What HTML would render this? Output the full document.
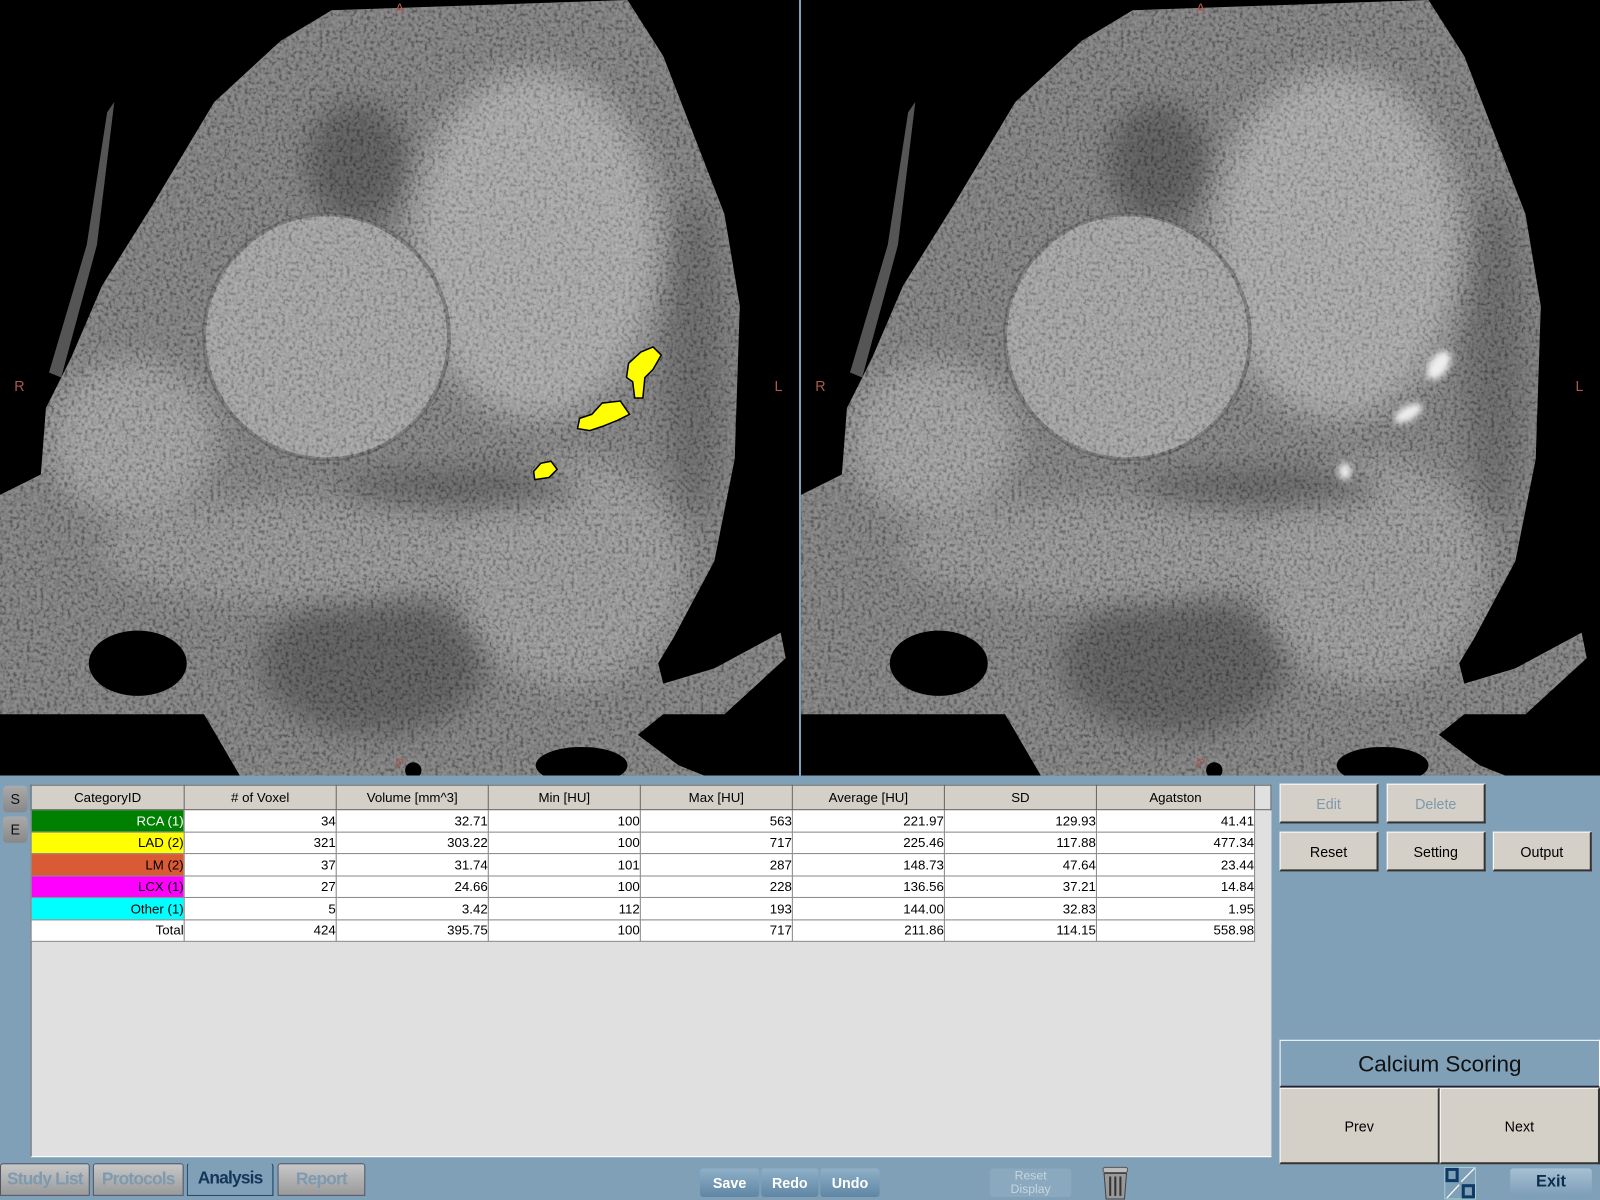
<!DOCTYPE html>
<html><head><meta charset="utf-8"><style>
html,body{margin:0;padding:0;width:1600px;height:1200px;overflow:hidden;background:#7fa0b7;font-family:"Liberation Sans",Arial,sans-serif}
#w{position:absolute;left:0;top:0;width:1568px;height:1176px;transform:scale(1.020408);transform-origin:0 0;background:#7fa0b7}
.a{position:absolute}
.pan{position:absolute;top:0;width:783px;height:760px;background:#000;overflow:hidden}
.lbl{position:absolute;color:#a85a50;font-size:14px}
table{border-collapse:collapse;position:absolute;left:30px;top:769px;font-size:13px;table-layout:fixed;width:1215px}
td{border:1px solid #8a8a8a;height:20.5px;padding:0;text-align:right;background:#fff;color:#000;overflow:hidden;white-space:nowrap}
th{border:1px solid #666;background:#d4d0c8;font-weight:normal;height:23px;font-size:13px;padding:0}
.btn{position:absolute;background:#d4d0c8;border:1px solid #fff;border-right:2px solid #333;border-bottom:2px solid #333;box-sizing:border-box;text-align:center;font-size:14px;color:#000}
.se{position:absolute;left:3px;width:24px;height:26px;background:linear-gradient(#aaa,#888);border-radius:4px;text-align:center;line-height:26px;font-size:14px;color:#111}
.tab{position:absolute;top:1140px;height:32px;background:linear-gradient(#c8c8c8,#9a9a9a);border:1px solid #556;border-radius:3px 3px 0 0;font-weight:bold;font-size:17px;color:#7d9ab0;text-align:center;line-height:30px;box-sizing:border-box;letter-spacing:-0.8px}
.bb{position:absolute;top:1145px;height:28px;background:linear-gradient(#8fb0c8,#5f86a4);border-radius:3px;color:#fff;font-weight:bold;font-size:14px;text-align:center;line-height:28px}
</style></head><body><div id="w">
<svg width="0" height="0" style="position:absolute"><defs>
<filter id="n" x="0" y="0" width="100%" height="100%"><feTurbulence type="fractalNoise" baseFrequency="0.3" numOctaves="2" seed="3"/><feColorMatrix type="matrix" values="2.5 0 0 0 -0.75  2.5 0 0 0 -0.75  2.5 0 0 0 -0.75  0 0 0 0 1"/></filter>
<filter id="b"><feGaussianBlur stdDeviation="14"/></filter>
<clipPath id="body"><polygon points="325,10 615,0 650,55 710,210 725,300 720,450 700,550 660,625 645,650 650,670 700,655 765,620 770,645 710,700 650,700 625,720 665,750 690,760 0,760 0,485 40,465 45,400 70,350 100,280 150,200 210,100 275,40"/></clipPath>
<g id="ct">
<rect width="783" height="760" fill="#000"/>
<g clip-path="url(#body)">
<rect width="783" height="760" fill="#747474"/>
<g filter="url(#b)">
<ellipse cx="525" cy="240" rx="120" ry="170" fill="#9c9c9c"/>
<ellipse cx="350" cy="160" rx="50" ry="60" fill="#555"/>
<ellipse cx="130" cy="430" rx="80" ry="75" fill="#929292"/>
<ellipse cx="365" cy="650" rx="110" ry="70" fill="#565656"/>
<ellipse cx="300" cy="540" rx="200" ry="50" fill="#868686"/>
<ellipse cx="560" cy="560" rx="110" ry="110" fill="#8c8c8c"/>
<ellipse cx="450" cy="480" rx="120" ry="20" fill="#5a5a5a"/>
<ellipse cx="680" cy="350" rx="30" ry="160" fill="#606060"/>
</g>
<circle cx="320" cy="330" r="120" fill="#979797"/>
<circle cx="320" cy="330" r="120" fill="none" stroke="#555" stroke-width="4" opacity=".6"/>
<rect width="783" height="760" filter="url(#n)" opacity=".22" style="mix-blend-mode:overlay"/>
<ellipse cx="135" cy="650" rx="48" ry="32" fill="#000"/>
<polygon points="0,700 200,700 235,760 0,760" fill="#000"/>
<circle cx="405" cy="755" r="8" fill="#000"/>
<ellipse cx="570" cy="750" rx="45" ry="18" fill="#000"/>
</g>
<polygon points="105,110 112,100 95,240 60,370 48,365 85,240" fill="#555"/>
</g>
</defs></svg>

<div class="pan" style="left:0"><svg width="783" height="760"><use href="#ct"/>
<g fill="#ffff00" stroke="#000" stroke-width="1.5">
<polygon points="628,345 640,340 648,348 640,362 632,370 630,390 622,390 620,374 614,370 616,356"/>
<polygon points="590,395 608,393 617,406 605,412 590,418 578,422 566,420 568,410 580,406"/>
<polygon points="530,454 540,452 546,460 538,468 524,470 523,462"/>
</g></svg>
<div class="lbl" style="left:387px;top:0">A</div><div class="lbl" style="left:14px;top:370px">R</div><div class="lbl" style="left:759px;top:370px">L</div><div class="lbl" style="left:387px;top:740px">P</div></div>

<div class="pan" style="left:785px"><svg width="783" height="760"><use href="#ct"/>
<g fill="#eee" style="filter:blur(3px)">
<ellipse cx="625" cy="358" rx="9" ry="16" transform="rotate(35 625 358)"/>
<ellipse cx="595" cy="405" rx="7" ry="15" transform="rotate(60 595 405)"/>
<ellipse cx="533" cy="462" rx="6" ry="8"/>
</g></svg>
<div class="lbl" style="left:387px;top:0">A</div><div class="lbl" style="left:14px;top:370px">R</div><div class="lbl" style="left:759px;top:370px">L</div><div class="lbl" style="left:387px;top:740px">P</div></div>
<div class="a" style="left:783px;top:0;width:2px;height:760px;background:#7fa0b7"></div>

<div class="se" style="top:770px">S</div><div class="se" style="top:800px">E</div>
<div class="a" style="left:30px;top:769px;width:1215px;height:364px;background:#e0e0e0;border-left:1px solid #666;border-bottom:1px solid #fff"></div>
<table>
<colgroup><col style="width:150px"><col style="width:149px"><col style="width:149px"><col style="width:149px"><col style="width:149px"><col style="width:149px"><col style="width:149px"><col style="width:155px"><col style="width:16px"></colgroup>
<tr><th>CategoryID</th><th># of Voxel</th><th>Volume [mm^3]</th><th>Min [HU]</th><th>Max [HU]</th><th>Average [HU]</th><th>SD</th><th>Agatston</th><th style="background:#e0e0e0"></th></tr>
<tr><td style="background:#008000;color:#fff">RCA (1)</td><td>34</td><td>32.71</td><td>100</td><td>563</td><td>221.97</td><td>129.93</td><td>41.41</td><td style="background:#e0e0e0;border:none"></td></tr>
<tr><td style="background:#ffff00">LAD (2)</td><td>321</td><td>303.22</td><td>100</td><td>717</td><td>225.46</td><td>117.88</td><td>477.34</td><td style="background:#e0e0e0;border:none"></td></tr>
<tr><td style="background:#d95a35">LM (2)</td><td>37</td><td>31.74</td><td>101</td><td>287</td><td>148.73</td><td>47.64</td><td>23.44</td><td style="background:#e0e0e0;border:none"></td></tr>
<tr><td style="background:#ff00ff">LCX (1)</td><td>27</td><td>24.66</td><td>100</td><td>228</td><td>136.56</td><td>37.21</td><td>14.84</td><td style="background:#e0e0e0;border:none"></td></tr>
<tr><td style="background:#00ffff">Other (1)</td><td>5</td><td>3.42</td><td>112</td><td>193</td><td>144.00</td><td>32.83</td><td>1.95</td><td style="background:#e0e0e0;border:none"></td></tr>
<tr><td>Total</td><td>424</td><td>395.75</td><td>100</td><td>717</td><td>211.86</td><td>114.15</td><td>558.98</td><td style="background:#e0e0e0;border:none"></td></tr>
</table>

<div class="btn" style="left:1254px;top:768px;width:97px;height:39px;line-height:38px;color:#7f98aa">Edit</div>
<div class="btn" style="left:1359px;top:768px;width:97px;height:39px;line-height:38px;color:#7f98aa">Delete</div>
<div class="btn" style="left:1254px;top:815px;width:97px;height:39px;line-height:38px">Reset</div>
<div class="btn" style="left:1359px;top:815px;width:97px;height:39px;line-height:38px">Setting</div>
<div class="btn" style="left:1463px;top:815px;width:97px;height:39px;line-height:38px">Output</div>

<div class="a" style="left:1254px;top:1019px;width:314px;height:47px;border:1px solid #fff;border-bottom:2px solid #223;box-sizing:border-box;text-align:center;line-height:46px;font-size:22px;color:#111">Calcium Scoring</div>
<div class="btn" style="left:1254px;top:1066px;width:157px;height:75px;line-height:74px">Prev</div>
<div class="btn" style="left:1411px;top:1066px;width:157px;height:75px;line-height:74px">Next</div>

<div class="tab" style="left:0;width:88px">Study List</div>
<div class="tab" style="left:91px;width:89px">Protocols</div>
<div class="tab" style="left:183px;width:85px;background:#7fa0b7;color:#13365a;border:1px solid #13365a;border-top:none">Analysis</div>
<div class="tab" style="left:272px;width:86px">Report</div>

<div class="bb" style="left:686px;width:58px">Save</div>
<div class="bb" style="left:746px;width:56px">Redo</div>
<div class="bb" style="left:804px;width:58px">Undo</div>
<div class="bb" style="left:970px;width:80px;font-weight:normal;font-size:12px;line-height:13px;color:#c8d6e0;background:#8aa8be;padding-top:1px;box-sizing:border-box">Reset<br>Display</div>
<svg class="a" style="left:1078px;top:1142px" width="30" height="34"><rect x="3" y="2" width="24" height="5" rx="2" fill="#bbb" stroke="#555"/><path d="M4 8 L26 8 L24 33 L6 33 Z" fill="#999" stroke="#444"/><path d="M10 11 V30 M15 11 V30 M20 11 V30" stroke="#333" stroke-width="2"/></svg>
<svg class="a" style="left:1415px;top:1143px" width="32" height="33"><rect x="1" y="1" width="30" height="31" fill="none" stroke="#cfe" stroke-width=".5"/><rect x="3" y="3" width="10" height="11" fill="none" stroke="#0d3a66" stroke-width="3"/><rect x="19" y="19" width="10" height="11" fill="none" stroke="#0d3a66" stroke-width="3"/><path d="M17 15 L30 2 M3 31 L15 18" stroke="#fff" stroke-width="1.2"/></svg>
<div class="bb" style="left:1480px;width:80px;font-size:16px;color:#0d2c4e;background:linear-gradient(#a6c0d3,#7b9db6)">Exit</div>
</div></body></html>
